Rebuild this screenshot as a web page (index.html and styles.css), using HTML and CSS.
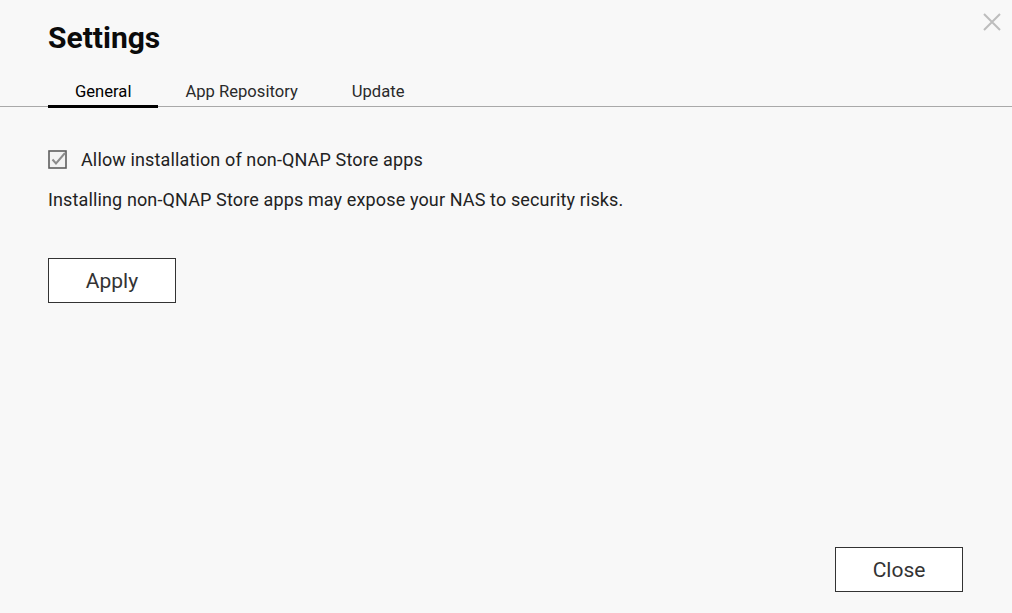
FILE: index.html
```html
<!DOCTYPE html>
<html lang="en">
<head>
    <meta charset="UTF-8">
    <title>Settings</title>
    <link rel="stylesheet" href="styles.css">
</head>
<body>
    <div class="dialog">
        <button class="close-x" aria-label="Close">
            <svg width="18" height="18" viewBox="0 0 18 18"><path d="M1 1 L17 17 M17 1 L1 17" stroke="#bdbdbd" stroke-width="2"/></svg>
        </button>
        <h1 class="title">Settings</h1>
        <div class="tabs">
            <div class="tab active">General</div>
            <div class="tab">App Repository</div>
            <div class="tab">Update</div>
        </div>
        <div class="content">
            <label class="check-row">
                <span class="checkbox">
                    <svg width="19" height="19" viewBox="0 0 19 19"><rect x="1" y="1" width="17" height="17" fill="#f3f3f3" stroke="#5e5e5e" stroke-width="1.6"/><path d="M4.5 9.5 L8 13.5 L17 3" fill="none" stroke="#8c8c8c" stroke-width="2"/></svg>
                </span>
                Allow installation of non-QNAP Store apps
            </label>
            <p class="note">Installing non-QNAP Store apps may expose your NAS to security risks.</p>
            <button class="btn">Apply</button>
        </div>
        <div class="footer">
            <button class="btn">Close</button>
        </div>
    </div>
</body>
</html>
```
FILE: styles.css
```css
body {
    margin: 0;
    font-family: Roboto, "Liberation Sans", sans-serif;
    background-color: #f8f8f8;
    color: #1a1a1a;
}
.dialog {
    height: 613px;
    display: flex;
    flex-direction: column;
    position: relative;
}
.close-x {
    position: absolute;
    top: 13px;
    right: 11px;
    border: none;
    background: none;
    padding: 0;
    cursor: pointer;
}
.title {
    margin: 20px 0 0 48px;
    font-size: 30px;
    font-weight: bold;
    line-height: 36px;
    color: #0b0b0b;
}
.tabs {
    display: flex;
    margin-top: 24px;
    padding-left: 48px;
    border-bottom: 1px solid #a9a9a9;
}
.tab {
    padding: 0 27px;
    font-size: 16.6px;
    line-height: 20px;
    padding-top: 2px;
    padding-bottom: 3px;
    color: #2a2a2a;
    border-bottom: 3px solid transparent;
    margin-bottom: -2px;
}
.tab.active {
    border-bottom-color: #000;
    color: #000;
}
.content {
    flex: 1;
    padding: 42px 48px 0;
}
.check-row {
    display: flex;
    align-items: center;
    font-size: 18px;
    letter-spacing: 0.13px;
    color: #222;
    gap: 14px;
}
.checkbox {
    display: flex;
}
.note {
    margin: 19px 0 0;
    font-size: 18px;
    letter-spacing: 0.13px;
    color: #222;
}
.btn {
    margin-top: 48px;
    width: 128px;
    height: 45px;
    background-color: #fff;
    border: 1.5px solid #333;
    font-family: Roboto, "Liberation Sans", sans-serif;
    font-size: 21px;
    color: #333;
    cursor: pointer;
}
.footer {
    display: flex;
    justify-content: flex-end;
    padding: 0 49px 21px 0;
}
.footer .btn {
    margin-top: 0;
}
```
